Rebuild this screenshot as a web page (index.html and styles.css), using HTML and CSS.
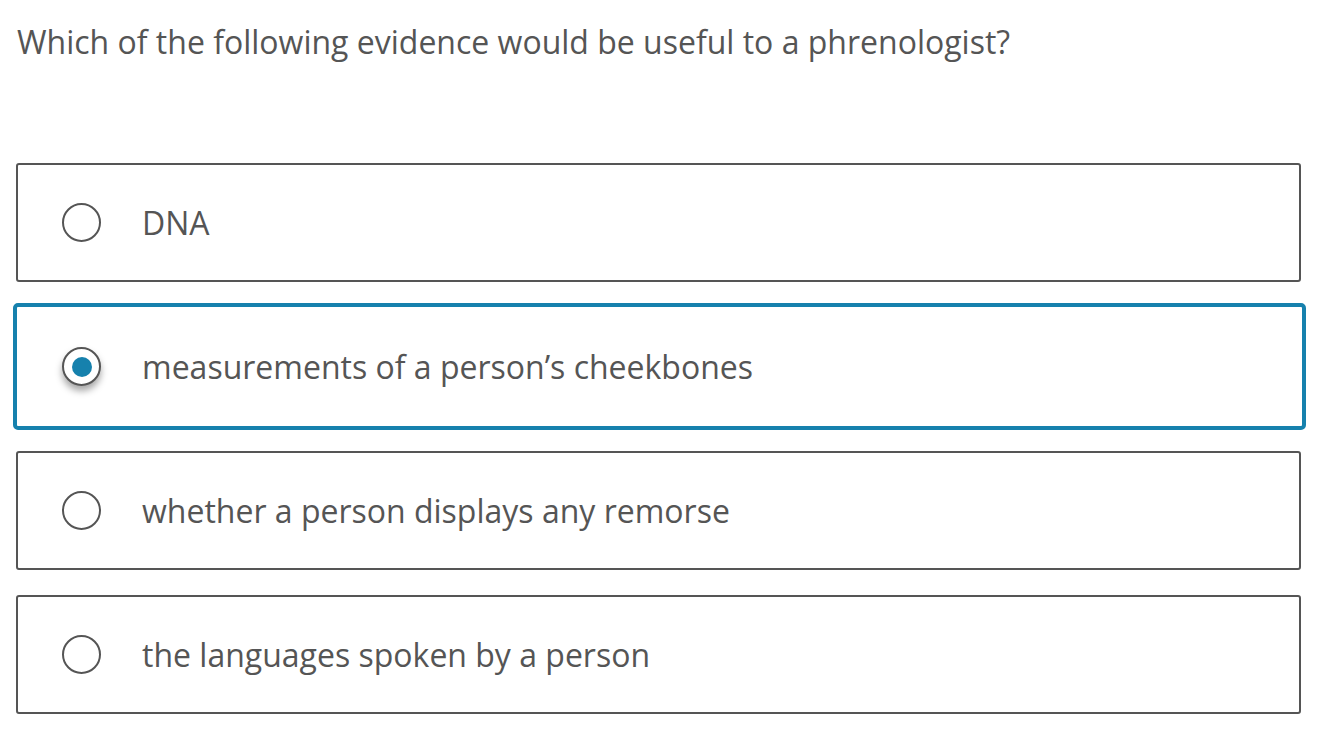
FILE: index.html
```html
<!DOCTYPE html>
<html lang="en">
<head>
<meta charset="utf-8">
<title>Question</title>
<link rel="stylesheet" href="styles.css">
</head>
<body>
<main class="quiz">
  <h1 class="question">Which of the following evidence would be useful to a phrenologist?</h1>
  <div class="options">
    <label class="option">
      <span class="radio"></span>
      <span class="label">DNA</span>
    </label>
    <label class="option selected">
      <span class="radio checked"></span>
      <span class="label">measurements of a person’s cheekbones</span>
    </label>
    <label class="option">
      <span class="radio"></span>
      <span class="label">whether a person displays any remorse</span>
    </label>
    <label class="option">
      <span class="radio"></span>
      <span class="label">the languages spoken by a person</span>
    </label>
  </div>
</main>
</body>
</html>
```
FILE: styles.css
```css
* { box-sizing: border-box; }
html, body { margin: 0; padding: 0; background: #fff; }
body {
  font-family: "Open Sans", "Liberation Sans", sans-serif;
  color: #555;
}
.quiz {
  padding: 21px 25px 0 16px;
}
.question {
  margin: 0;
  font-size: 32px;
  font-weight: 400;
  line-height: 42px;
  padding-left: 1px;
}
.options {
  margin-top: 100px;
  display: flex;
  flex-direction: column;
  gap: 25px;
}
.option {
  display: flex;
  align-items: center;
  height: 119px;
  border: 2px solid #555;
  border-radius: 3px;
  padding-left: 44px;
  font-size: 32px;
}
.option.selected {
  border: 4px solid #1681ad;
  border-radius: 5px;
  height: 127px;
  margin: -4px -5px -4px -3px;
  padding-left: 45px;
}
.radio {
  flex: none;
  width: 39px;
  height: 39px;
  border: 2px solid #555;
  border-radius: 50%;
  margin-right: 41px;
  display: flex;
  align-items: center;
  justify-content: center;
  background: #fff;
}
.radio.checked {
  box-shadow: 0 5px 7px rgba(0, 0, 0, 0.35);
}
.radio.checked::after {
  content: "";
  width: 20px;
  height: 20px;
  border-radius: 50%;
  background: #1681ad;
}
.label {
  line-height: 40px;
}
```
